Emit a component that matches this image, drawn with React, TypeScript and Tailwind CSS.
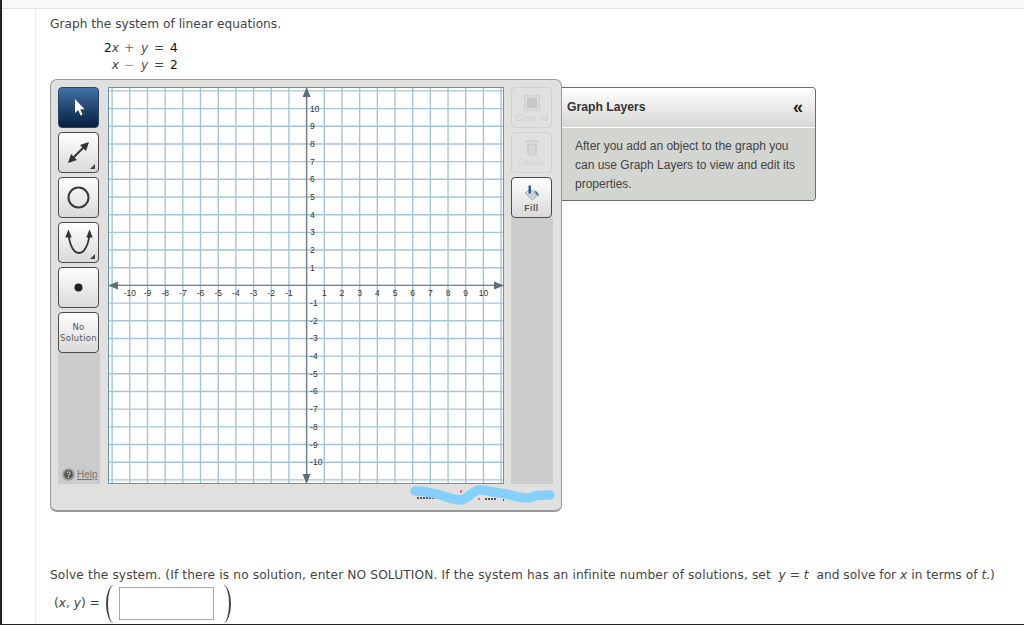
const UNIT = 17.68
const CX = 198.6
const CY = 198.4

const ticks = [-11, -10, -9, -8, -7, -6, -5, -4, -3, -2, -1, 0, 1, 2, 3, 4, 5, 6, 7, 8, 9, 10, 11]
const labels = [-10, -9, -8, -7, -6, -5, -4, -3, -2, -1, 1, 2, 3, 4, 5, 6, 7, 8, 9, 10]

function GraphGrid() {
  return (
    <svg width="396" height="397" viewBox="0 0 396 397" className="block shrink-0 bg-white">
      {ticks.map(k => (
        <line key={`v${k}`} x1={CX + k * UNIT} x2={CX + k * UNIT} y1="0" y2="397" stroke="#a3c5da" strokeWidth="1.4" />
      ))}
      {ticks.map(k => (
        <line key={`h${k}`} y1={CY + k * UNIT} y2={CY + k * UNIT} x1="0" x2="396" stroke="#a3c5da" strokeWidth="1.4" />
      ))}
      <rect x="0.5" y="0.5" width="395" height="396" fill="none" stroke="#5e94bd" />
      <line x1={CX} x2={CX} y1="4" y2="393" stroke="#74858f" strokeWidth="1.4" />
      <line x1="4" x2="392" y1={CY} y2={CY} stroke="#74858f" strokeWidth="1.4" />
      <path d={`M${CX} 0l-4 10h8zM${CX} 397l-4-10h8z`} fill="#5d6e79" />
      <path d={`M0 ${CY}l10-4v8zM396 ${CY}l-10-4v8z`} fill="#5d6e79" />
      {labels.map(n => (
        <text key={`x${n}`} x={CX + n * UNIT} y={CY + 10.5} textAnchor="middle" fontFamily="'Liberation Sans', sans-serif" fontSize="8.5" fill="#333">
          {n}
        </text>
      ))}
      {labels.map(n => (
        <text key={`y${n}`} x={CX + 3.5} y={CY - n * UNIT + 3} fontFamily="'Liberation Sans', sans-serif" fontSize="8.5" fill="#333">
          {n}
        </text>
      ))}
    </svg>
  )
}

function Corner() {
  return <path d="M36 36v-5l-5 5z" fill="#444" />
}

function ToolButton({ children, active }: { children: React.ReactNode; active?: boolean }) {
  return (
    <div
      className={`h-[41px] w-[41px] rounded-[4px] border ${
        active ? 'border-[#2a4464] bg-gradient-to-b from-[#4473a8] to-[#06203f]' : 'border-[#4a4a4a] bg-gradient-to-b from-white to-[#d9d9d9]'
      }`}
    >
      <svg width="39" height="39" viewBox="0 0 39 39" className="block">
        {children}
      </svg>
    </div>
  )
}

function LeftToolbar() {
  return (
    <div className="flex h-[397px] w-[42px] shrink-0 flex-col gap-[4px]">
      <ToolButton active>
        <path d="M16 11v14l3.2-3 2.4 5.6 2-1-2.4-5.4h4.3z" fill="#fff" />
      </ToolButton>
      <ToolButton>
        <path d="M11 28L28 11" stroke="#333" strokeWidth="2" />
        <path d="M30 9l-3 9-6-6zM9 30l3-9 6 6z" fill="#333" />
        <Corner />
      </ToolButton>
      <ToolButton>
        <circle cx="19.5" cy="19.5" r="10" fill="none" stroke="#3a3a3a" strokeWidth="2" />
      </ToolButton>
      <ToolButton>
        <path d="M9.8 13C11 23 15 30 20 30s9-7 10.2-17" fill="none" stroke="#333" strokeWidth="1.8" />
        <path d="M9.5 6.5l-3.2 8h6.4zM30.5 6.5l-3.2 8h6.4z" fill="#333" />
        <Corner />
      </ToolButton>
      <ToolButton>
        <circle cx="19.5" cy="19.5" r="4" fill="#222" />
      </ToolButton>
      <div className="flex h-[41px] w-[41px] flex-col items-center justify-center rounded-[4px] border border-[#4a4a4a] bg-gradient-to-b from-white to-[#d9d9d9] font-['DejaVu_Sans',sans-serif] text-[8.5px] leading-[11px] tracking-[0.3px] text-[#555]">
        <span>No</span>
        <span>Solution</span>
      </div>
      <div className="-mt-[4px] flex flex-1 items-end bg-[#cbcbcb] pb-[3px] pl-[4px]">
        <svg width="13" height="13" viewBox="0 0 13 13" className="mr-[2px]">
          <circle cx="6.5" cy="6.5" r="6.2" fill="#9a9a9a" />
          <circle cx="6.5" cy="6.5" r="4.4" fill="#555" />
          <circle cx="6.5" cy="9.2" r="0.8" fill="#ddd" />
          <path d="M5 5.2a1.5 1.5 0 1 1 1.5 1.6v.8" stroke="#ddd" fill="none" />
        </svg>
        <span className="font-['Liberation_Sans',sans-serif] text-[10px] leading-[13px] text-[#777] underline">Help</span>
      </div>
    </div>
  )
}

function RightToolbar() {
  return (
    <div className="flex h-[397px] w-[42px] shrink-0 flex-col gap-[4px]">
      <div className="flex h-[41px] w-[41px] flex-col items-center rounded-[4px] border border-[#d0d0d0] pt-[7px]">
        <div className="flex h-[16px] w-[16px] items-center justify-center border border-[#d2d2d2] bg-[#dadada]">
          <div className="h-[10px] w-[10px] bg-[#c8c8c8]" />
        </div>
        <span className="mt-[2px] whitespace-nowrap font-['Liberation_Sans',sans-serif] text-[9px] leading-[11px] text-[#d0d0d0]">Clear All</span>
      </div>
      <div className="flex h-[41px] w-[41px] flex-col items-center rounded-[4px] border border-[#d0d0d0] pt-[5px]">
        <svg width="18" height="18" viewBox="0 0 18 18">
          <path d="M2 2.5h14V4H2zM3.5 5.5h11l-1 12h-9z" fill="#cccccc" />
          <path d="M7 7v9M9 7v9M11 7v9" stroke="#e2e2e2" />
        </svg>
        <span className="mt-[1px] font-['Liberation_Sans',sans-serif] text-[8.5px] leading-[11px] tracking-[0.4px] text-[#d0d0d0]">Delete</span>
      </div>
      <div className="flex h-[41px] w-[41px] flex-col items-center rounded-[4px] border border-[#4a4a4a] bg-gradient-to-b from-white to-[#d9d9d9] pt-[6px]">
        <svg width="18" height="18" viewBox="0 0 18 18">
          <path d="M2 9l5.5-4 7 6.5-5 4.5z" fill="#cfd3d6" stroke="#8a8f93" strokeWidth="0.6" />
          <path d="M5.5 1.5h2.5v8H5.5z" fill="#2f5f9e" />
          <path d="M11 6.5c3 .5 5 2.5 5 6l-3-2.5z" fill="#3b79b5" />
        </svg>
        <span className="mt-[1px] font-['Liberation_Sans',sans-serif] text-[8.5px] font-bold leading-[11px] tracking-[0.5px] text-[#555]">Fill</span>
      </div>
      <div className="-mt-[4px] flex-1 bg-[#cbcbcb]" />
    </div>
  )
}

function LayersPanel() {
  return (
    <div className="mt-[8px] w-[254px] shrink-0 overflow-hidden rounded-r-[4px] border border-l-0 border-[#6d6d6d] font-['Liberation_Sans',sans-serif]">
      <div className="flex h-[40px] items-center justify-between border-b border-white bg-gradient-to-b from-white to-[#d6d7d3] pl-[5px] pr-[12px] shadow-[0_1px_0_#a8a8a8]">
        <span className="text-[12.2px] font-bold text-[#333]">Graph Layers</span>
        <span className="mb-[2px] text-[18px] font-bold leading-none text-[#222]">«</span>
      </div>
      <div className="h-[72px] bg-[#d3d5d0] px-[13px] pt-[9px] text-[12px] leading-[19px] text-[#444]">
        After you add an object to the graph you can use Graph Layers to view and edit its properties.
      </div>
    </div>
  )
}

function EquationRow({ lead, sign, result }: { lead: React.ReactNode; sign: string; result: string }) {
  return (
    <div className="flex h-[17px] items-center leading-[17px]">
      <span className="w-[69px] text-right">{lead}</span>
      <span className={`w-[20px] text-center ${sign === '−' ? 'text-[#999]' : 'text-[#777]'}`}>{sign}</span>
      <i className="ml-[2px] w-[13px] text-[#555]">y</i>
      <span className="w-[10px] text-center">=</span>
      <span className="ml-[6px] text-[#111]">{result}</span>
    </div>
  )
}

export default function App() {
  return (
    <div className="flex h-[625px] w-[1024px] overflow-hidden bg-white font-['DejaVu_Sans',sans-serif] text-[12.2px] text-[#444]">
      <div className="w-[2px] shrink-0 bg-[#222]" />
      <div className="flex min-w-0 flex-1 flex-col">
        <div className="h-[9px] shrink-0 border-b border-[#e2e2e2] bg-[#f8f8f8]" />
        <div className="ml-[33px] flex min-h-0 flex-1 flex-col border-l border-[#ececec] pl-[14px]">
          <p className="mt-[7px] h-[17px] leading-[17px]">Graph the system of linear equations.</p>
          <div className="mt-[7px]">
            <EquationRow lead={<><span className="text-[#111]">2</span><i>x</i></>} sign="+" result="4" />
            <EquationRow lead={<i>x</i>} sign="−" result="2" />
          </div>
          <div className="mt-[5px] flex items-start">
            <div className="relative flex h-[433px] w-[512px] shrink-0 items-start gap-[8px] rounded-[7px] border border-b-2 border-[#9a9a9a] bg-[#e0e0df] pl-[7px] pt-[7px]">
              <LeftToolbar />
              <GraphGrid />
              <div className="ml-[-1px]">
                <RightToolbar />
              </div>
              <svg width="150" height="24" viewBox="0 0 150 24" className="absolute left-[355px] top-[403px]">
                <path d="M11 15h20M79 16h11M97 17h1" stroke="#555" strokeWidth="2" strokeDasharray="2 1" />
                <path d="M55 7v3M72 16h2" stroke="#f0506e" strokeWidth="1.5" />
                <path d="M9 8C20 8 26 10 34 12c8 2 12 5 20 5s12-10 20-10 12 2 20 3c10 1 18 5 27 5 5 0 6-2 11-2.500L144 12" fill="none" stroke="#85d0fb" strokeWidth="9.500" strokeLinecap="round" />
              </svg>
            </div>
            <LayersPanel />
          </div>
          <p className="mt-[55px] h-[17px] whitespace-nowrap leading-[17px]">
            <span className="tracking-[0.135px]">Solve the system. (If there is no solution, enter NO SOLUTION. If the system has an infinite number of solutions, </span><span className="tracking-[0.03px]">set&nbsp; <i>y</i> = <i>t</i>&nbsp; and solve for <i>x</i> in terms of <i>t</i>.)</span>
          </p>
          <div className="mt-[2px] flex h-[35px] items-center">
            <span className="ml-[4px] w-[52px] whitespace-nowrap">(<i>x</i>, <i>y</i>) =</span>
            <div className="h-[38px] w-[8px] shrink-0 rounded-l-[8px_19px] border-l-2 border-[#444]" />
            <div className="ml-[5px] h-[33px] w-[95px] border border-[#a8a8a8] bg-white" />
            <div className="ml-[9px] h-[38px] w-[8px] shrink-0 rounded-r-[8px_19px] border-r-2 border-[#444]" />
          </div>
        </div>
        <div className="h-[1px] shrink-0 bg-[#222]" />
      </div>
    </div>
  )
}
